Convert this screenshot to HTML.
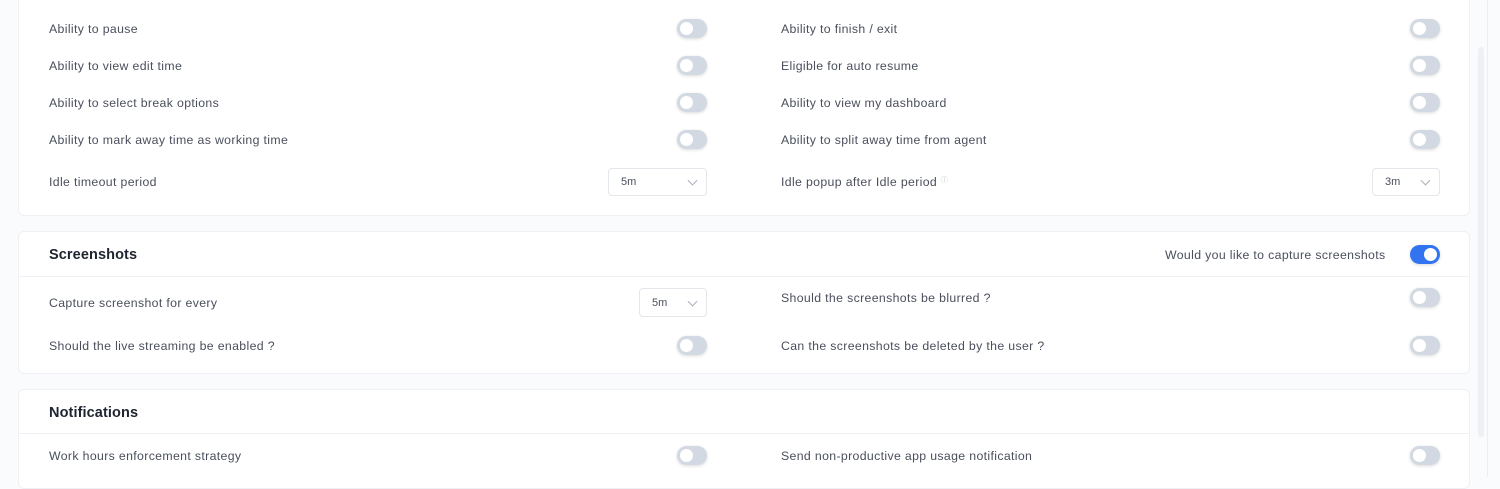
<!DOCTYPE html>
<html><head><style>
*{box-sizing:border-box;margin:0;padding:0}
body{width:1500px;height:477px;background:#fafbfc;position:relative;overflow:hidden;font-family:"Liberation Sans",sans-serif;color:#4a4f5c}
.card{position:absolute;left:18px;width:1452px;background:#fff;border:1px solid #eef0f3;border-radius:6px}
.t{position:absolute;font-size:12.3px;line-height:14px;white-space:nowrap;letter-spacing:0.35px;margin-top:1px}
.h{position:absolute;font-size:14.5px;font-weight:bold;color:#1f2430;line-height:16px;letter-spacing:0.1px;margin-top:1px}
.tg{position:absolute;width:30px;height:19px;border-radius:10px;background:#d3d9e2;box-shadow:0 1px 3px rgba(0,0,0,.15)}
.tg::after{content:"";position:absolute;left:3px;top:3px;width:13px;height:13px;border-radius:50%;background:#fff}
.tg.on{background:#3274f0}
.tg.on::after{left:14px}
.sel{position:absolute;border:1px solid #e3e6eb;border-radius:4px;background:#fff;font-size:11px;color:#4a4f5c}
.sel span{position:absolute;left:12px;top:50%;transform:translateY(-50%)}
.sel i{position:absolute;right:10px;top:50%;width:7px;height:7px;border-right:1px solid #aab;border-bottom:1px solid #aab;transform:translateY(-70%) rotate(45deg)}
.div{position:absolute;left:0;right:0;height:1px;background:#eef0f3}
</style></head><body>
<div class="card" style="top:-10px;height:226px"></div>
<div class="card" style="top:231px;height:143px"><div class="div" style="top:44px"></div></div>
<div class="card" style="top:389px;height:100px"><div class="div" style="top:43px"></div></div>
<div style="position:absolute;left:1487px;top:0;width:1px;height:477px;background:#eceef1"></div>
<div style="position:absolute;left:1478px;top:47px;width:6px;height:390px;background:#eef0f3;border-radius:3px"></div>

<div class="t" style="left:49px;top:21px">Ability to pause</div>
<div class="t" style="left:49px;top:58px">Ability to view edit time</div>
<div class="t" style="left:49px;top:95px">Ability to select break options</div>
<div class="t" style="left:49px;top:132px">Ability to mark away time as working time</div>
<div class="t" style="left:49px;top:174px">Idle timeout period</div>
<div class="tg" style="left:677px;top:19px"></div>
<div class="tg" style="left:677px;top:56px"></div>
<div class="tg" style="left:677px;top:93px"></div>
<div class="tg" style="left:677px;top:130px"></div>
<div class="sel" style="left:608px;top:168px;width:99px;height:28px"><span>5m</span><i></i></div>

<div class="t" style="left:781px;top:21px">Ability to finish / exit</div>
<div class="t" style="left:781px;top:58px">Eligible for auto resume</div>
<div class="t" style="left:781px;top:95px">Ability to view my dashboard</div>
<div class="t" style="left:781px;top:132px">Ability to split away time from agent</div>
<div class="t" style="left:781px;top:174px">Idle popup after Idle period <span style="position:relative;top:-4px;font-size:7px;color:#bbb">ⓘ</span></div>
<div class="tg" style="left:1410px;top:19px"></div>
<div class="tg" style="left:1410px;top:56px"></div>
<div class="tg" style="left:1410px;top:93px"></div>
<div class="tg" style="left:1410px;top:130px"></div>
<div class="sel" style="left:1372px;top:168px;width:68px;height:28px"><span>3m</span><i></i></div>

<div class="h" style="left:49px;top:246px">Screenshots</div>
<div class="t" style="left:1165px;top:247px">Would you like to capture screenshots</div>
<div class="tg on" style="left:1410px;top:245px"></div>
<div class="t" style="left:49px;top:295px">Capture screenshot for every</div>
<div class="sel" style="left:639px;top:288px;width:68px;height:29px"><span>5m</span><i></i></div>
<div class="t" style="left:49px;top:338px">Should the live streaming be enabled ?</div>
<div class="tg" style="left:677px;top:336px"></div>
<div class="t" style="left:781px;top:290px">Should the screenshots be blurred ?</div>
<div class="tg" style="left:1410px;top:288px"></div>
<div class="t" style="left:781px;top:338px">Can the screenshots be deleted by the user ?</div>
<div class="tg" style="left:1410px;top:336px"></div>

<div class="h" style="left:49px;top:404px">Notifications</div>
<div class="t" style="left:49px;top:448px">Work hours enforcement strategy</div>
<div class="tg" style="left:677px;top:446px"></div>
<div class="t" style="left:781px;top:448px">Send non-productive app usage notification</div>
<div class="tg" style="left:1410px;top:446px"></div>
</body></html>
